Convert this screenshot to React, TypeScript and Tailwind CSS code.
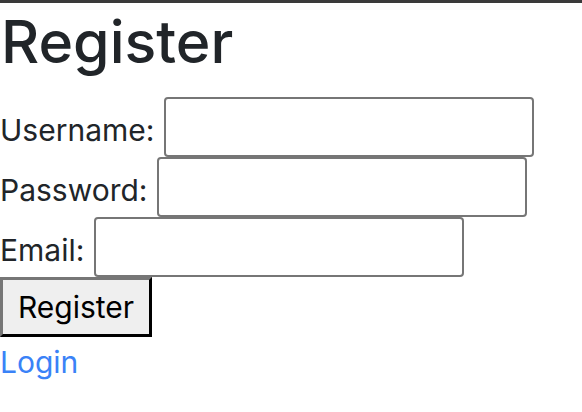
import React from "react";

const font = { fontFamily: "Inter, 'Noto Sans', sans-serif" };

const Field: React.FC<{ label: string; type?: string }> = ({ label, type = "text" }) => (
  <div className="flex h-[60px] items-center gap-[10px]">
    <label className="pt-[6px] text-[30px] leading-none text-[#212529]">{label}</label>
    <input
      type={type}
      className="h-[60px] w-[370px] rounded-[4px] border-2 border-[#767676] bg-white px-2 outline-none"
    />
  </div>
);

export default function App() {
  return (
    <div className="min-h-screen border-t-[3px] border-[#3a3a3a] bg-white" style={font}>
      <h1 className="mt-[4px] mb-[20px] pl-[1px] text-[59px] font-medium leading-[70px] text-[#212529]">
        Register
      </h1>
      <form onSubmit={(e) => e.preventDefault()}>
        <Field label="Username:" />
        <Field label="Password:" type="password" />
        <Field label="Email:" type="email" />
        <button
          type="submit"
          className="h-[60px] w-[152px] border-[3px] border-t-[#767676] border-l-[#767676] border-r-black border-b-black bg-[#efefef] text-[30px] text-black"
        >
          Register
        </button>
      </form>
      <a href="#" className="mt-[6px] block text-[30px] leading-[38px] text-[#3a82f7]">
        Login
      </a>
    </div>
  );
}
